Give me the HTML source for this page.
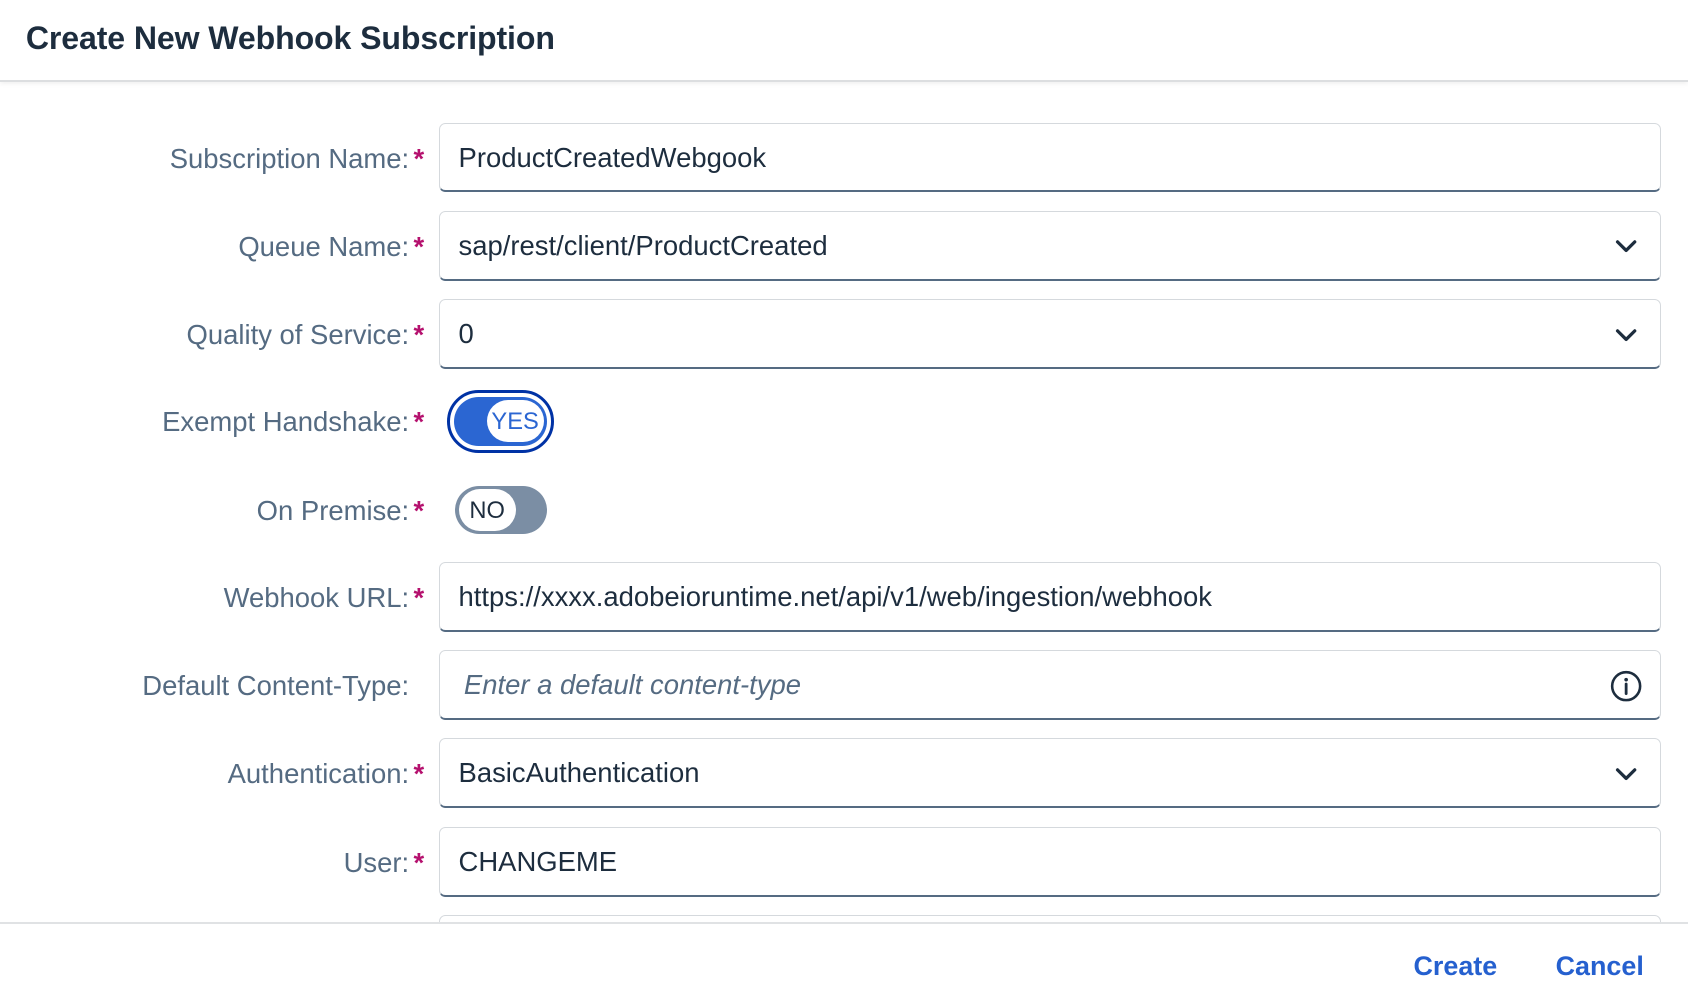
<!DOCTYPE html>
<html><head><meta charset="utf-8"><style>
html,body{margin:0;padding:0;background:#fff;overflow:hidden}
body{width:1688px;height:1006px}
#w{position:relative;width:1568px;height:934px;zoom:1.07653;font-family:"Liberation Sans",sans-serif;color:#1d2d3e;overflow:hidden}
.hdr{position:absolute;left:0;top:0;width:1568px;height:74px;border-bottom:2px solid #dcdee0;box-shadow:0 2px 4px rgba(0,0,0,.06)}
.hdr span{position:absolute;left:24px;top:19px;font-size:29.8px;font-weight:bold;color:#1d2d3e;letter-spacing:-.1px}
.lbl{position:absolute;right:1174px;font-size:25.5px;color:#556b82;white-space:nowrap;height:67px;line-height:67px}
.lbl b{color:#b5116e;font-weight:bold;margin-left:4px}
.in{position:absolute;left:408px;width:1133px;height:62px;border:1px solid #d5d9dd;border-bottom:2px solid #556b82;border-radius:6px;box-sizing:content-box;font-size:25.5px;line-height:64px;text-indent:17px;white-space:nowrap;overflow:hidden}
.ph{font-style:italic;color:#556b82;text-indent:22px}
.ic{position:absolute;right:16px;top:17px}
.ft{position:absolute;left:0;top:856px;width:1568px;height:80px;border-top:2px solid #e0e2e4;background:#fff}
.btn{position:absolute;top:26px;font-size:25px;font-weight:bold;color:#2560cf}
</style></head><body><div id="w">
<div class="hdr"><span>Create New Webhook Subscription</span></div>

<div class="lbl" style="top:114px">Subscription Name:<b>*</b></div>
<div class="in" style="top:114px">ProductCreatedWebgook</div>

<div class="lbl" style="top:196px">Queue Name:<b>*</b></div>
<div class="in" style="top:196px">sap/rest/client/ProductCreated<svg class="ic" width="30" height="30" viewBox="0 0 30 30"><path d="M7 11l8 8 8-8" fill="none" stroke="#1d2d3e" stroke-width="3" stroke-linecap="round" stroke-linejoin="round"/></svg></div>

<div class="lbl" style="top:278px">Quality of Service:<b>*</b></div>
<div class="in" style="top:278px">0<svg class="ic" width="30" height="30" viewBox="0 0 30 30"><path d="M7 11l8 8 8-8" fill="none" stroke="#1d2d3e" stroke-width="3" stroke-linecap="round" stroke-linejoin="round"/></svg></div>

<div class="lbl" style="top:359px">Exempt Handshake:<b>*</b></div>
<div style="position:absolute;left:415px;top:362px;width:94px;height:53px;border:3px solid #0032a5;border-radius:30px"></div>
<div style="position:absolute;left:422px;top:369px;width:86px;height:45px;background:#2b66d2;border-radius:23px"></div>
<div style="position:absolute;left:452px;top:372px;width:53px;height:39px;background:#fff;border-radius:20px;color:#2b66d2;font-size:22px;line-height:41px;text-align:center">YES</div>

<div class="lbl" style="top:441px">On Premise:<b>*</b></div>
<div style="position:absolute;left:423px;top:451px;width:85px;height:45px;background:#7b8ea4;border-radius:23px"></div>
<div style="position:absolute;left:426px;top:454px;width:53px;height:39px;background:#fff;border-radius:20px;color:#1d2d3e;font-size:22px;line-height:41px;text-align:center">NO</div>

<div class="lbl" style="top:522px">Webhook URL:<b>*</b></div>
<div class="in" style="top:522px">https://xxxx.adobeioruntime.net/api/v1/web/ingestion/webhook</div>

<div class="lbl" style="top:604px">Default Content-Type:<b style="visibility:hidden">*</b></div>
<div class="in ph" style="top:604px">Enter a default content-type<svg class="ic" width="30" height="30" viewBox="0 0 30 30"><circle cx="15" cy="15" r="13" fill="none" stroke="#1d2d3e" stroke-width="2.4"/><circle cx="15" cy="9" r="1.7" fill="#1d2d3e"/><path d="M15 13v9" stroke="#1d2d3e" stroke-width="2.6" stroke-linecap="round"/></svg></div>

<div class="lbl" style="top:686px">Authentication:<b>*</b></div>
<div class="in" style="top:686px">BasicAuthentication<svg class="ic" width="30" height="30" viewBox="0 0 30 30"><path d="M7 11l8 8 8-8" fill="none" stroke="#1d2d3e" stroke-width="3" stroke-linecap="round" stroke-linejoin="round"/></svg></div>

<div class="lbl" style="top:768px">User:<b>*</b></div>
<div class="in" style="top:768px">CHANGEME</div>

<div class="in" style="top:850px"></div>

<div class="ft"><span class="btn" style="left:1313px">Create</span><span class="btn" style="left:1445px">Cancel</span></div>
</div></body></html>
